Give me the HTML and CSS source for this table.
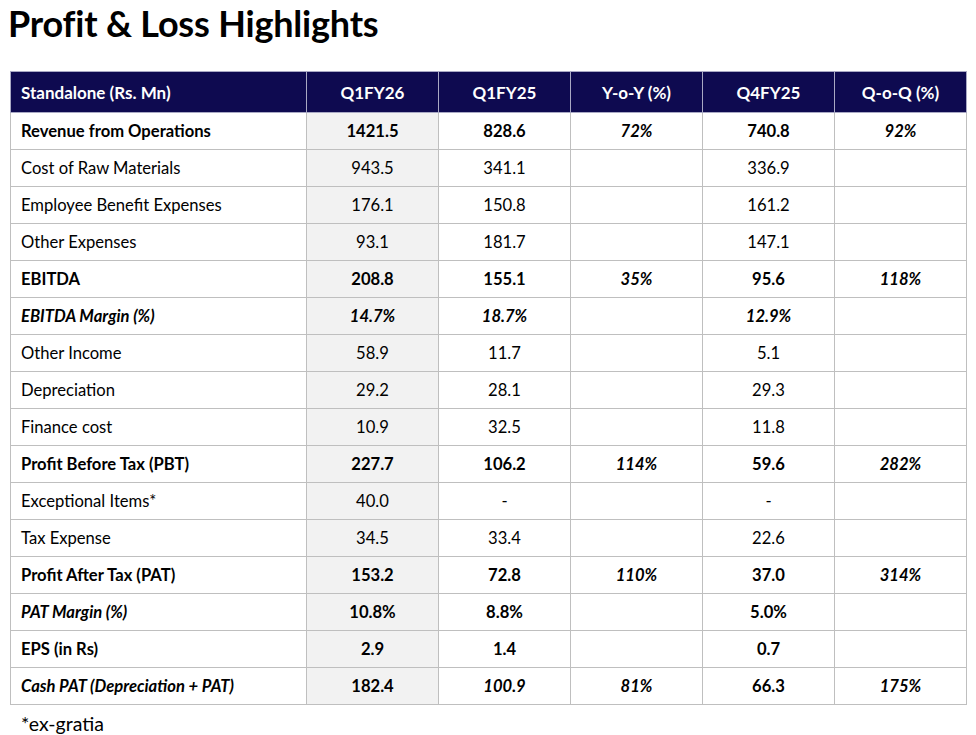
FILE: index.html
```html
<!DOCTYPE html>
<html>
<head>
<meta charset="utf-8">
<link rel="stylesheet" href="styles.css">
</head>
<body>
<h1 class="title">Profit &amp; Loss Highlights</h1>
<table class="pl">
  <colgroup>
    <col class="c-label"><col class="c-num"><col class="c-num"><col class="c-num"><col class="c-num"><col class="c-num">
  </colgroup>
  <thead>
    <tr><th class="lbl">Standalone (Rs. Mn)</th><th>Q1FY26</th><th>Q1FY25</th><th>Y-o-Y (%)</th><th>Q4FY25</th><th>Q-o-Q (%)</th></tr>
  </thead>
  <tbody>
    <tr class="b"><td class="lbl">Revenue from Operations</td><td class="cur">1421.5</td><td>828.6</td><td class="i">72%</td><td>740.8</td><td class="i">92%</td></tr>
    <tr><td class="lbl">Cost of Raw Materials</td><td class="cur">943.5</td><td>341.1</td><td></td><td>336.9</td><td></td></tr>
    <tr><td class="lbl">Employee Benefit Expenses</td><td class="cur">176.1</td><td>150.8</td><td></td><td>161.2</td><td></td></tr>
    <tr><td class="lbl">Other Expenses</td><td class="cur">93.1</td><td>181.7</td><td></td><td>147.1</td><td></td></tr>
    <tr class="b"><td class="lbl">EBITDA</td><td class="cur">208.8</td><td>155.1</td><td class="i">35%</td><td>95.6</td><td class="i">118%</td></tr>
    <tr class="b it"><td class="lbl">EBITDA Margin (%)</td><td class="cur">14.7%</td><td>18.7%</td><td></td><td>12.9%</td><td></td></tr>
    <tr><td class="lbl">Other Income</td><td class="cur">58.9</td><td>11.7</td><td></td><td>5.1</td><td></td></tr>
    <tr><td class="lbl">Depreciation</td><td class="cur">29.2</td><td>28.1</td><td></td><td>29.3</td><td></td></tr>
    <tr><td class="lbl">Finance cost</td><td class="cur">10.9</td><td>32.5</td><td></td><td>11.8</td><td></td></tr>
    <tr class="b"><td class="lbl">Profit Before Tax (PBT)</td><td class="cur">227.7</td><td>106.2</td><td class="i">114%</td><td>59.6</td><td class="i">282%</td></tr>
    <tr><td class="lbl">Exceptional Items*</td><td class="cur">40.0</td><td>-</td><td></td><td>-</td><td></td></tr>
    <tr><td class="lbl">Tax Expense</td><td class="cur">34.5</td><td>33.4</td><td></td><td>22.6</td><td></td></tr>
    <tr class="b"><td class="lbl">Profit After Tax (PAT)</td><td class="cur">153.2</td><td>72.8</td><td class="i">110%</td><td>37.0</td><td class="i">314%</td></tr>
    <tr class="b"><td class="lbl i">PAT Margin (%)</td><td class="cur">10.8%</td><td>8.8%</td><td></td><td>5.0%</td><td></td></tr>
    <tr class="b"><td class="lbl">EPS (in Rs)</td><td class="cur">2.9</td><td>1.4</td><td></td><td>0.7</td><td></td></tr>
    <tr class="b"><td class="lbl i">Cash PAT (Depreciation + PAT)</td><td class="cur">182.4</td><td class="i">100.9</td><td class="i">81%</td><td>66.3</td><td class="i">175%</td></tr>
  </tbody>
</table>
<p class="note">*ex-gratia</p>
</body>
</html>
```

FILE: styles.css
```css
html, body {
  margin: 0;
  padding: 0;
  background: #ffffff;
}
body {
  font-family: Lato, "Liberation Sans", sans-serif;
  color: #000;
}
.title {
  margin: 0 0 0 8px;
  padding-top: 2px;
  height: 71px;
  box-sizing: border-box;
  font-size: 36px;
  line-height: 42px;
  font-weight: 700;
  letter-spacing: -0.2px;
}
.pl {
  margin-left: 10px;
  border-collapse: collapse;
  table-layout: fixed;
  width: 957px;
  font-size: 16.6px;
}
.c-label { width: 296px; }
.c-num { width: 132px; }
.pl th, .pl td {
  border: 1px solid #bfbfbf;
  text-align: center;
  padding: 0;
  white-space: nowrap;
}
.pl th {
  background: #0e0a50;
  color: #fff;
  font-weight: 700;
  font-size: 17px;
  height: 40px;
  border-color: #a9a9c4;
}
.pl td {
  height: 36px;
}
.pl .lbl {
  text-align: left;
  padding-left: 10px;
}
.pl .cur {
  background: #f2f2f2;
}
.b td { font-weight: 700; }
.it td, .pl .i { font-style: italic; }
.note {
  margin: 7px 0 0 21px;
  font-size: 19.5px;
  line-height: 24px;
}
```
